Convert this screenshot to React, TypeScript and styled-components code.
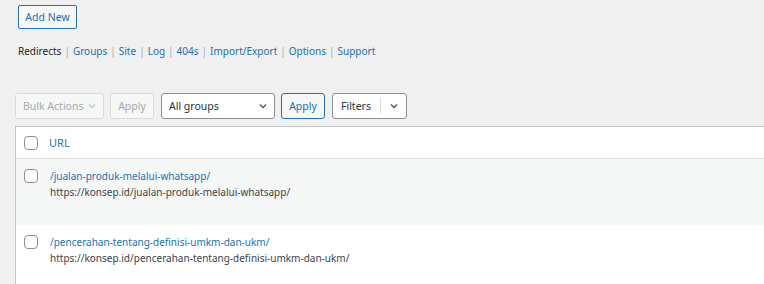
import React from 'react';
import { styled, createGlobalStyle } from 'styled-components';

const GlobalStyle = createGlobalStyle`
  body {
    margin: 0;
    background: #f0f0f1;
    font-family: "Noto Sans", "Open Sans", sans-serif;
    font-size: 10px;
    color: #3c434a;
  }
`;

const tabs = ['Groups', 'Site', 'Log', '404s', 'Import/Export', 'Options', 'Support'];

const rows = [
  {
    source: '/jualan-produk-melalui-whatsapp/',
    target: 'https://konsep.id/jualan-produk-melalui-whatsapp/',
  },
  {
    source: '/pencerahan-tentang-definisi-umkm-dan-ukm/',
    target: 'https://konsep.id/pencerahan-tentang-definisi-umkm-dan-ukm/',
  },
];

const Chevron: React.FC<{ color?: string }> = ({ color = '#50575e' }) => (
  <svg width="10" height="10" viewBox="0 0 10 10">
    <path d="M2 3.5 L5 6.5 L8 3.5" fill="none" stroke={color} strokeWidth="1.3" />
  </svg>
);

const App: React.FC = () => {
  return (
    <Page>
      <GlobalStyle />
      <AddNew>Add New</AddNew>
      <Nav>
        <Current>Redirects</Current>
        {tabs.map((t) => (
          <React.Fragment key={t}>
            <Sep>|</Sep>
            <NavLink>{t}</NavLink>
          </React.Fragment>
        ))}
      </Nav>
      <Toolbar>
        <Select $disabled $width={89}>
          Bulk Actions <Chevron color="#c3c4c7" />
        </Select>
        <Button $disabled>Apply</Button>
        <Select $width={114} $gapLeft={1}>
          All groups <Chevron />
        </Select>
        <Button $primary>Apply</Button>
        <Split>
          <SplitLabel>Filters</SplitLabel>
          <SplitArrow>
            <Chevron />
          </SplitArrow>
        </Split>
      </Toolbar>
      <Table>
        <HeadRow>
          <Check />
          <HeadLink>URL</HeadLink>
        </HeadRow>
        {rows.map((r, i) => (
          <Row key={r.source} $alt={i % 2 === 0}>
            <Check />
            <Cell>
              <SourceLink>{r.source}</SourceLink>
              <Target>{r.target}</Target>
            </Cell>
          </Row>
        ))}
      </Table>
    </Page>
  );
};

export default App;

const Page = styled.div`
  padding: 5px 0 0 15px;
`;

const AddNew = styled.button`
  margin-left: 3px;
  width: 59px;
  height: 24px;
  padding: 0;
  border: 1px solid #2271b1;
  border-radius: 2px;
  background: #f6f7f7;
  color: #2271b1;
  font: inherit;
  font-size: 10.5px;
`;

const Nav = styled.div`
  display: flex;
  align-items: center;
  margin: 14px 0 0 3px;
  height: 16px;
  line-height: 16px;
`;

const Current = styled.span`
  color: #1d2327;
`;

const Sep = styled.span`
  color: #a7aaad;
  margin: 0 3px;
`;

const NavLink = styled.span`
  color: #2271b1;
`;

const Toolbar = styled.div`
  display: flex;
  align-items: center;
  margin-top: 34px;
  gap: 6px;
  height: 26px;
`;

const Select = styled.div<{ $disabled?: boolean; $width: number; $gapLeft?: number }>`
  box-sizing: border-box;
  display: flex;
  align-items: center;
  justify-content: space-between;
  width: ${(p) => p.$width}px;
  height: 26px;
  margin-left: ${(p) => p.$gapLeft ?? 0}px;
  padding: 0 6px 0 7px;
  border: 1px solid ${(p) => (p.$disabled ? '#dcdcde' : '#8c8f94')};
  border-radius: 3px;
  background: ${(p) => (p.$disabled ? '#f6f7f7' : '#fff')};
  color: ${(p) => (p.$disabled ? '#a7aaad' : '#2c3338')};
  font-size: 10.5px;
`;

const Button = styled.div<{ $disabled?: boolean; $primary?: boolean }>`
  box-sizing: border-box;
  display: flex;
  align-items: center;
  justify-content: center;
  width: 44px;
  height: 26px;
  border: 1px solid ${(p) => (p.$disabled ? '#dcdcde' : '#2271b1')};
  border-radius: 3px;
  background: #f6f7f7;
  color: ${(p) => (p.$disabled ? '#a7aaad' : '#2271b1')};
  font-size: 10.5px;
`;

const Split = styled.div`
  box-sizing: border-box;
  display: flex;
  align-items: center;
  width: 75px;
  height: 26px;
  margin-left: 1px;
  border: 1px solid #8c8f94;
  border-radius: 3px;
  background: #fff;
  color: #2c3338;
  font-size: 10.5px;
`;

const SplitLabel = styled.div`
  flex: 1;
  padding-left: 8px;
  border-right: 1px solid #dcdcde;
  line-height: 16px;
`;

const SplitArrow = styled.div`
  display: flex;
  justify-content: center;
  width: 25px;
`;

const Table = styled.div`
  margin-top: 7px;
  min-height: 170px;
  border-top: 1px solid #c3c4c7;
  border-left: 1px solid #c3c4c7;
  background: #fff;
`;

const HeadRow = styled.div`
  display: flex;
  align-items: center;
  gap: 11px;
  height: 31px;
  padding-left: 8px;
  border-bottom: 1px solid #dcdcde;
`;

const HeadLink = styled.span`
  color: #2271b1;
  font-size: 11px;
`;

const Check = styled.span`
  box-sizing: border-box;
  flex: none;
  width: 14px;
  height: 14px;
  border: 1px solid #8c8f94;
  border-radius: 4px;
  background: #fff;
`;

const Row = styled.div<{ $alt: boolean }>`
  display: flex;
  align-items: flex-start;
  gap: 12px;
  height: 66px;
  padding: 10px 0 0 8px;
  box-sizing: border-box;
  background: ${(p) => (p.$alt ? '#f6f7f7' : '#fff')};
`;

const Cell = styled.div`
  display: flex;
  flex-direction: column;
  margin-top: -1px;
  line-height: 16px;
`;

const SourceLink = styled.span`
  color: #2271b1;
`;

const Target = styled.span`
  color: #3c434a;
`;
